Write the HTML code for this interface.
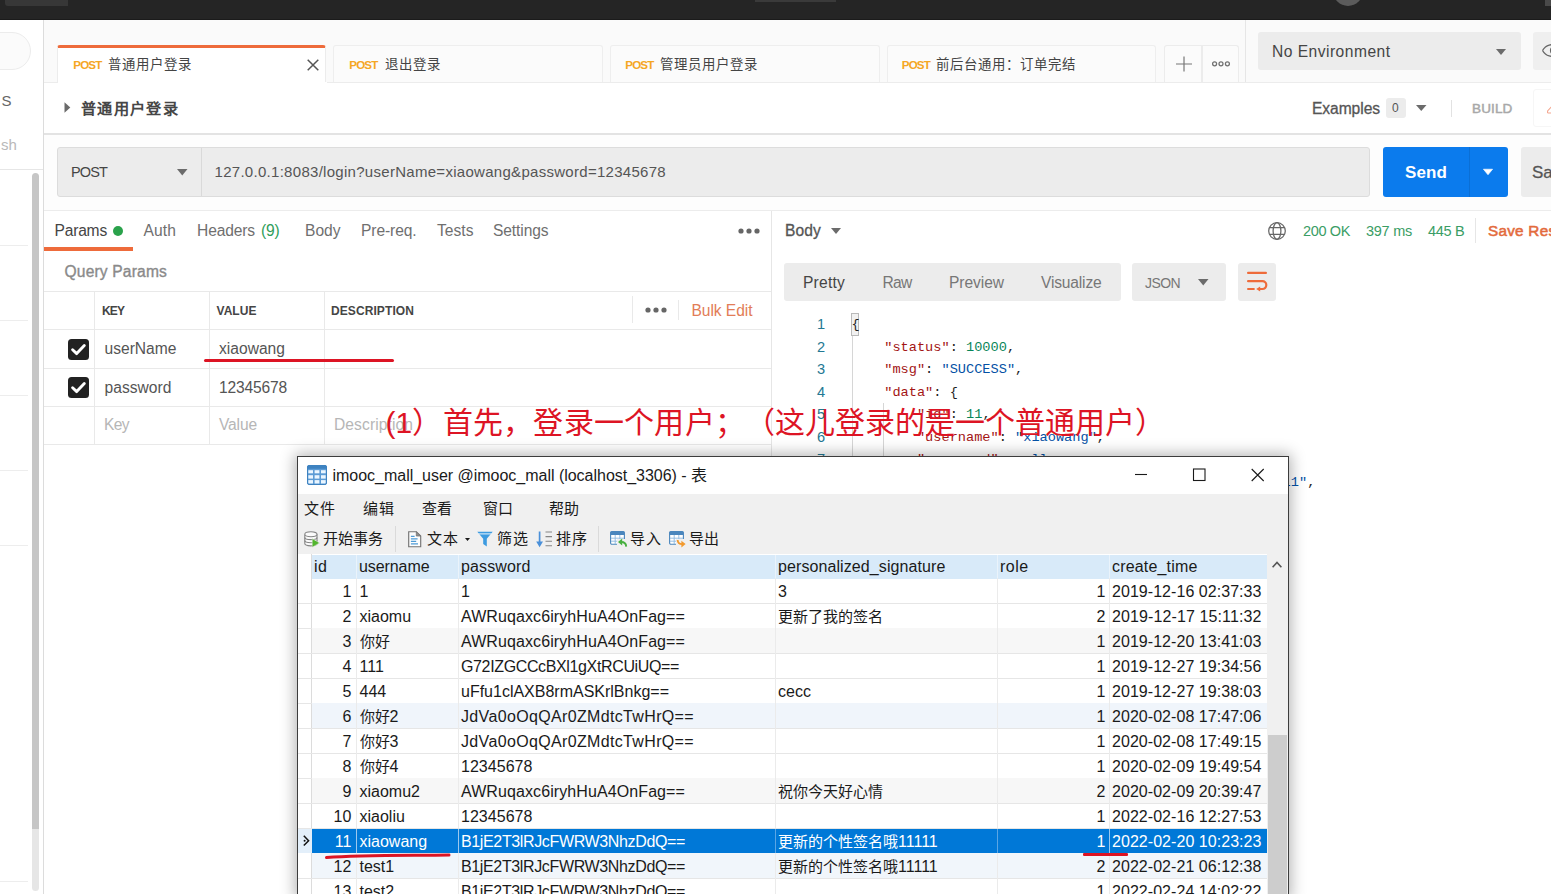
<!DOCTYPE html>
<html lang="zh-CN"><head><meta charset="utf-8"><title>Postman</title>
<style>
html,body{margin:0;padding:0;width:1551px;height:894px;overflow:hidden;background:#fff}
#root{position:relative;width:1551px;height:894px;overflow:hidden;background:#fff;font-family:"Liberation Sans",sans-serif;}
.a{position:absolute;box-sizing:border-box}
.t{position:absolute;white-space:pre;line-height:20px;height:20px}
.tj{white-space:nowrap;text-align:justify;text-align-last:justify}
.j{display:inline-block;white-space:nowrap;text-align:justify;text-align-last:justify;line-height:20px;vertical-align:baseline}
svg{display:block;overflow:visible}
</style></head>
<body>
<div id="root">
<div class="a" style="left:0px;top:0px;width:1551px;height:20px;background:#252525;border-bottom:1px solid #1b1b1b;"></div>
<div class="a" style="left:5px;top:0px;width:63px;height:6px;background:#373737;border-radius:0 0 0 3px;"></div>
<div class="a" style="left:755px;top:0px;width:81px;height:2px;background:#3a3a3a;"></div>
<div class="a" style="left:1333px;top:-24px;width:30px;height:30px;background:#5b5b5b;border-radius:50%;"></div>
<div class="a" style="left:1545px;top:0px;width:6px;height:6px;background:#4a4a4a;"></div>
<div class="a" style="left:44px;top:20px;width:1507px;height:62px;background:#fafafa;"></div>
<div class="a" style="left:0px;top:20px;width:44px;height:874px;background:#ffffff;border-right:1px solid #dcdcdc;"></div>
<div class="a" style="left:-40px;top:32px;width:71px;height:38px;background:#fbfbfb;border:1px solid #ececec;border-radius:19px;"></div>
<span id="t1" class="t" style="top:91.10px;font-size:15px;color:#666;left:1.5px;">S</span>
<span id="t2" class="t" style="top:134.80px;font-size:15px;color:#b9b9b9;left:1px;letter-spacing:0.078px;">sh</span>
<div class="a" style="left:0px;top:169px;width:43px;height:1px;background:#e6e6e6;"></div>
<div class="a" style="left:0px;top:245px;width:28px;height:1px;background:#ededed;"></div>
<div class="a" style="left:0px;top:320px;width:28px;height:1px;background:#ededed;"></div>
<div class="a" style="left:0px;top:395px;width:28px;height:1px;background:#ededed;"></div>
<div class="a" style="left:0px;top:470px;width:28px;height:1px;background:#ededed;"></div>
<div class="a" style="left:0px;top:545px;width:28px;height:1px;background:#ededed;"></div>
<div class="a" style="left:0px;top:881px;width:28px;height:1px;background:#ededed;"></div>
<div class="a" style="left:32px;top:173px;width:7px;height:660px;background:#c6c6c6;border-radius:4px;"></div>
<div class="a" style="left:32px;top:829px;width:7px;height:62px;background:#e6e6e6;border-radius:0 0 4px 4px;"></div>
<div class="a" style="left:56.8px;top:45px;width:269.7px;height:37px;background:#ffffff;border-top:3px solid #ee6b3b;border-radius:3px 3px 0 0;border-left:1px solid #ececec;border-right:1px solid #ececec;"></div>
<div class="a" style="left:333px;top:45.2px;width:270px;height:37.3px;background:#fbfbfb;border:1px solid #eeeeee;border-bottom:none;border-radius:3px 3px 0 0;"></div>
<div class="a" style="left:609.5px;top:45.2px;width:270.5px;height:37.3px;background:#fbfbfb;border:1px solid #eeeeee;border-bottom:none;border-radius:3px 3px 0 0;"></div>
<div class="a" style="left:886.5px;top:45.2px;width:269.5px;height:37.3px;background:#fbfbfb;border:1px solid #eeeeee;border-bottom:none;border-radius:3px 3px 0 0;"></div>
<span id="t3" class="t" style="top:55.18px;font-size:11.6px;color:#f5a623;left:73.2px;font-weight:700;letter-spacing:-0.795px;">POST</span>
<span id="t4" class="t tj" style="top:54.86px;font-size:13.4px;color:#444;left:108px;width:82.5px;">普通用户登录</span>
<span id="t5" class="t" style="top:55.18px;font-size:11.6px;color:#f5a623;left:349.2px;font-weight:700;letter-spacing:-0.795px;">POST</span>
<span id="t6" class="t tj" style="top:54.86px;font-size:13.4px;color:#444;left:384.5px;width:55.5px;">退出登录</span>
<span id="t7" class="t" style="top:55.18px;font-size:11.6px;color:#f5a623;left:625.2px;font-weight:700;letter-spacing:-0.795px;">POST</span>
<span id="t8" class="t tj" style="top:54.86px;font-size:13.4px;color:#444;left:660px;width:97px;">管理员用户登录</span>
<span id="t9" class="t" style="top:55.18px;font-size:11.6px;color:#f5a623;left:901.7px;font-weight:700;letter-spacing:-0.795px;">POST</span>
<span id="t10" class="t tj" style="top:54.86px;font-size:13.4px;color:#444;left:936px;width:138.5px;">前后台通用：订单完结</span>
<svg class="a" style="left:307px;top:59px;" width="12" height="12" viewBox="0 0 12 12"><path d="M0.7 0.7 L11.3 11.3 M11.3 0.7 L0.7 11.3" stroke="#555" stroke-width="1.5" fill="none"/></svg>
<div class="a" style="left:1163.8px;top:45px;width:38.7px;height:37.5px;background:#fbfbfb;border:1px solid #ececec;border-bottom:none;border-radius:3px 0 0 0;"></div>
<div class="a" style="left:1202px;top:45px;width:36.5px;height:37.5px;background:#fbfbfb;border:1px solid #ececec;border-bottom:none;border-radius:0 3px 0 0;"></div>
<svg class="a" style="left:1176px;top:56px;" width="16" height="16" viewBox="0 0 16 16"><path d="M0 8 H16 M8 0.5 V15.5" stroke="#777" stroke-width="1.2" fill="none"/></svg>
<svg class="a" style="left:1211px;top:60px;" width="20" height="8" viewBox="0 0 20 8"><g fill="none" stroke="#707070" stroke-width="1.25"><circle cx="3.6" cy="3.8" r="2"/><circle cx="10" cy="3.8" r="2"/><circle cx="16.4" cy="3.8" r="2"/></g></svg>
<div class="a" style="left:1245px;top:20px;width:1px;height:62px;background:#e6e6e6;"></div>
<div class="a" style="left:1258px;top:32px;width:263px;height:37.5px;background:#ececec;border-radius:3px;"></div>
<span id="t11" class="t" style="top:41.59px;font-size:15.6px;color:#454545;left:1272px;letter-spacing:0.478px;">No Environment</span>
<svg class="a" style="left:1495.5px;top:48.5px;" width="10" height="6" viewBox="0 0 10 6"><path d="M0 0 H10 L5 6 Z" fill="#6b6b6b"/></svg>
<div class="a" style="left:1532.5px;top:32px;width:30px;height:37.5px;background:#efefef;border-radius:3px;"></div>
<svg class="a" style="left:1541.2px;top:43px;overflow:hidden;" width="12" height="15" viewBox="0 0 12 15"><path d="M1.5 7.5 C5 1.5 11 0.5 16 3 M1.5 7.5 C5 13.5 11 14.5 16 12" stroke="#666" stroke-width="1.3" fill="none"/><circle cx="12.5" cy="7.5" r="3" fill="none" stroke="#666" stroke-width="1.2"/></svg>
<div class="a" style="left:44px;top:82px;width:1507px;height:51px;background:#ffffff;"></div>
<div class="a" style="left:44px;top:82px;width:14px;height:1px;background:#ececec;"></div>
<div class="a" style="left:326.5px;top:82px;width:1225px;height:1px;background:#ececec;"></div>
<div class="a" style="left:44px;top:133px;width:1507px;height:1.5px;background:#e3e3e3;"></div>
<svg class="a" style="left:64px;top:102px;" width="7" height="11" viewBox="0 0 7 11"><path d="M0.5 0.3 L6.3 5.5 L0.5 10.7 Z" fill="#6a6a6a"/></svg>
<span id="t12" class="t tj" style="top:99.03px;font-size:15.2px;color:#464646;left:81px;font-weight:700;width:96.5px;">普通用户登录</span>
<span id="t13" class="t" style="top:99.09px;font-size:15.6px;color:#555;left:1312px;letter-spacing:-0.059px;-webkit-text-stroke:0.3px #555;">Examples</span>
<div class="a" style="left:1386px;top:98px;width:19.5px;height:19.5px;background:#ececec;border-radius:3px;"></div>
<span id="t14" class="t" style="top:97.84px;font-size:12px;color:#555;left:1392px;letter-spacing:0.312px;">0</span>
<svg class="a" style="left:1415.5px;top:105px;" width="10.5" height="6" viewBox="0 0 10.5 6"><path d="M0 0 H10.5 L5.25 6 Z" fill="#6b6b6b"/></svg>
<div class="a" style="left:1450.5px;top:100px;width:1px;height:17px;background:#e2e2e2;"></div>
<span id="t15" class="t" style="top:99.32px;font-size:13.5px;color:#a8a8a8;left:1472px;letter-spacing:0.147px;-webkit-text-stroke:0.5px #a8a8a8;">BUILD</span>
<div class="a" style="left:1533px;top:89px;width:30px;height:38px;background:#ffffff;border:1px solid #f6f6f6;border-radius:3px;"></div>
<svg class="a" style="left:1546px;top:102px;" width="6" height="12" viewBox="0 0 6 12"><path d="M1.6 11 V9 L6 4.2 M1.6 11 H6" stroke="#f4a68e" stroke-width="1.1" fill="none"/></svg>
<div class="a" style="left:44px;top:134.5px;width:1507px;height:75px;background:#fdfdfd;"></div>
<div class="a" style="left:57px;top:147px;width:1313px;height:49.5px;background:#ececec;border:1px solid #dcdcdc;border-radius:3px;"></div>
<div class="a" style="left:201px;top:148px;width:1px;height:47.5px;background:#d9d9d9;"></div>
<span id="t16" class="t" style="top:162.48px;font-size:14.5px;color:#454545;left:71px;letter-spacing:-0.871px;">POST</span>
<svg class="a" style="left:176.5px;top:169px;" width="10.5" height="6.5" viewBox="0 0 10.5 6.5"><path d="M0 0 H10.5 L5.25 6.5 Z" fill="#6b6b6b"/></svg>
<span id="t17" class="t" style="top:162.30px;font-size:15px;color:#555;left:214.5px;letter-spacing:0.289px;">127.0.0.1:8083/login?userName=xiaowang&amp;password=12345678</span>
<div class="a" style="left:1383px;top:147px;width:124.5px;height:49.5px;background:#0b7bed;border-radius:3px;"></div>
<div class="a" style="left:1469px;top:147px;width:1px;height:49.5px;background:#0a6fd6;"></div>
<span id="t18" class="t" style="top:162.81px;font-size:17px;color:#fff;left:1405px;font-weight:700;letter-spacing:0.109px;">Send</span>
<svg class="a" style="left:1482.7px;top:168.8px;" width="10" height="6" viewBox="0 0 10 6"><path d="M0.4 0.2 H9.6 L5 5.8 Z" fill="#fff" stroke="#fff" stroke-width="0.6" stroke-linejoin="round"/></svg>
<div class="a" style="left:1521px;top:147px;width:40px;height:49.5px;background:#ececec;border-radius:3px;"></div>
<span id="t19" class="t" style="top:162.81px;font-size:17px;color:#555;left:1532px;-webkit-text-stroke:0.3px #555;">Sa</span>
<div class="a" style="left:44px;top:209.5px;width:1507px;height:1px;background:#ececec;"></div>
<div class="a" style="left:44px;top:210.5px;width:726.5px;height:684px;background:#ffffff;"></div>
<div class="a" style="left:770.5px;top:210.5px;width:1px;height:684px;background:#e6e6e6;"></div>
<span id="t20" class="t" style="top:221.09px;font-size:15.6px;color:#454545;left:54.5px;letter-spacing:-0.206px;">Params</span>
<div class="a" style="left:113px;top:226px;width:10px;height:10px;background:#2aa24b;border-radius:50%;"></div>
<div class="a" style="left:44px;top:247px;width:89px;height:4px;background:#ee6b3b;"></div>
<span id="t21" class="t" style="top:221.09px;font-size:15.6px;color:#6f6f6f;left:143.5px;letter-spacing:0.102px;">Auth</span>
<span id="t22" class="t" style="top:221.09px;font-size:15.6px;color:#6f6f6f;left:197px;letter-spacing:-0.136px;">Headers</span>
<span id="t23" class="t" style="top:221.09px;font-size:15.6px;color:#2f9e5b;left:261px;letter-spacing:-0.188px;">(9)</span>
<span id="t24" class="t" style="top:221.09px;font-size:15.6px;color:#6f6f6f;left:305px;letter-spacing:-0.012px;">Body</span>
<span id="t25" class="t" style="top:221.09px;font-size:15.6px;color:#6f6f6f;left:361px;letter-spacing:-0.105px;">Pre-req.</span>
<span id="t26" class="t" style="top:221.09px;font-size:15.6px;color:#6f6f6f;left:437px;letter-spacing:0.019px;">Tests</span>
<span id="t27" class="t" style="top:221.09px;font-size:15.6px;color:#6f6f6f;left:493px;letter-spacing:-0.107px;">Settings</span>
<svg class="a" style="left:738px;top:228px;" width="22" height="6" viewBox="0 0 22 6"><g fill="#666"><circle cx="3" cy="3" r="2.6"/><circle cx="11" cy="3" r="2.6"/><circle cx="19" cy="3" r="2.6"/></g></svg>
<span id="t28" class="t" style="top:261.59px;font-size:15.6px;color:#8a8a8a;left:64.5px;letter-spacing:0.164px;-webkit-text-stroke:0.35px #8a8a8a;">Query Params</span>
<div class="a" style="left:44px;top:291px;width:726.5px;height:1px;background:#e9e9e9;"></div>
<div class="a" style="left:44px;top:328.7px;width:726.5px;height:1px;background:#e9e9e9;"></div>
<div class="a" style="left:44px;top:367.7px;width:726.5px;height:1px;background:#e9e9e9;"></div>
<div class="a" style="left:44px;top:405.7px;width:726.5px;height:1px;background:#e9e9e9;"></div>
<div class="a" style="left:44px;top:444.3px;width:726.5px;height:1px;background:#e9e9e9;"></div>
<div class="a" style="left:94px;top:292px;width:1px;height:153px;background:#e9e9e9;"></div>
<div class="a" style="left:208.5px;top:292px;width:1px;height:153px;background:#e9e9e9;"></div>
<div class="a" style="left:323.5px;top:292px;width:1px;height:153px;background:#e9e9e9;"></div>
<div class="a" style="left:632px;top:296px;width:1px;height:27px;background:#e9e9e9;"></div>
<div class="a" style="left:678px;top:300px;width:1px;height:20px;background:#e9e9e9;"></div>
<span id="t29" class="t" style="top:300.84px;font-size:12px;color:#454545;left:102px;font-weight:700;letter-spacing:-0.896px;">KEY</span>
<span id="t30" class="t" style="top:300.84px;font-size:12px;color:#454545;left:216.5px;font-weight:700;letter-spacing:0.044px;">VALUE</span>
<span id="t31" class="t" style="top:300.84px;font-size:12px;color:#454545;left:331px;font-weight:700;letter-spacing:0.089px;">DESCRIPTION</span>
<svg class="a" style="left:645px;top:307px;" width="22" height="6" viewBox="0 0 22 6"><g fill="#666"><circle cx="3" cy="3" r="2.6"/><circle cx="11" cy="3" r="2.6"/><circle cx="19" cy="3" r="2.6"/></g></svg>
<span id="t32" class="t" style="top:301.09px;font-size:15.6px;color:#e27d57;left:691.5px;letter-spacing:-0.061px;">Bulk Edit</span>
<div class="a" style="left:68px;top:338.5px;width:21px;height:21px;background:#222222;border-radius:3.5px;"></div>
<svg class="a" style="left:68px;top:338.5px;" width="21" height="21" viewBox="0 0 21 21"><path d="M4.6 10.8 L8.7 14.6 L16.3 6.6" stroke="#fff" stroke-width="2.9" fill="none" stroke-linecap="round" stroke-linejoin="round"/></svg>
<div class="a" style="left:68px;top:376.5px;width:21px;height:21px;background:#222222;border-radius:3.5px;"></div>
<svg class="a" style="left:68px;top:376.5px;" width="21" height="21" viewBox="0 0 21 21"><path d="M4.6 10.8 L8.7 14.6 L16.3 6.6" stroke="#fff" stroke-width="2.9" fill="none" stroke-linecap="round" stroke-linejoin="round"/></svg>
<span id="t33" class="t" style="top:338.99px;font-size:15.6px;color:#555;left:104.6px;letter-spacing:-0.017px;">userName</span>
<span id="t34" class="t" style="top:338.99px;font-size:15.6px;color:#555;left:219px;letter-spacing:0.014px;">xiaowang</span>
<span id="t35" class="t" style="top:377.99px;font-size:15.6px;color:#555;left:104.6px;letter-spacing:0.006px;">password</span>
<span id="t36" class="t" style="top:377.99px;font-size:15.6px;color:#555;left:219px;letter-spacing:-0.174px;">12345678</span>
<span id="t37" class="t" style="top:415.09px;font-size:15.6px;color:#b6b6b6;left:104px;letter-spacing:-0.625px;">Key</span>
<span id="t38" class="t" style="top:415.09px;font-size:15.6px;color:#b6b6b6;left:219px;letter-spacing:-0.147px;">Value</span>
<span id="t39" class="t" style="top:415.09px;font-size:15.6px;color:#b6b6b6;left:334px;letter-spacing:0.091px;">Description</span>
<div class="a" style="left:771.5px;top:210.5px;width:780px;height:684px;background:#ffffff;"></div>
<span id="t40" class="t" style="top:221.09px;font-size:15.6px;color:#555;left:785px;letter-spacing:0.113px;-webkit-text-stroke:0.3px #555;">Body</span>
<svg class="a" style="left:831px;top:228px;" width="10" height="6" viewBox="0 0 10 6"><path d="M0 0 H10 L5 6 Z" fill="#6b6b6b"/></svg>
<svg class="a" style="left:1267.8px;top:221.8px;" width="18" height="18" viewBox="0 0 18 18"><g fill="none" stroke="#666" stroke-width="1.25"><circle cx="9" cy="9" r="8.3"/><ellipse cx="9" cy="9" rx="3.9" ry="8.3"/><path d="M1.6 5.7 H16.4 M1.6 12.3 H16.4"/></g></svg>
<span id="t41" class="t" style="top:221.48px;font-size:14.5px;color:#3a9d65;left:1303px;letter-spacing:-0.362px;">200 OK</span>
<span id="t42" class="t" style="top:221.48px;font-size:14.5px;color:#3a9d65;left:1366px;letter-spacing:-0.260px;">397 ms</span>
<span id="t43" class="t" style="top:221.48px;font-size:14.5px;color:#3a9d65;left:1428px;letter-spacing:-0.281px;">445 B</span>
<div class="a" style="left:1475px;top:218px;width:1px;height:25px;background:#e6e6e6;"></div>
<span id="t44" class="t" style="top:221.20px;font-size:15.3px;color:#e36b3d;left:1488px;letter-spacing:0.25px;-webkit-text-stroke:0.55px #e36b3d;">Save Res</span>
<div class="a" style="left:784px;top:263px;width:336.5px;height:37.5px;background:#ececec;border-radius:3px;"></div>
<span id="t45" class="t" style="top:272.59px;font-size:15.6px;color:#454545;left:803px;letter-spacing:0.211px;">Pretty</span>
<span id="t46" class="t" style="top:272.59px;font-size:15.6px;color:#777;left:882.5px;letter-spacing:-0.734px;">Raw</span>
<span id="t47" class="t" style="top:272.59px;font-size:15.6px;color:#777;left:949px;letter-spacing:-0.067px;">Preview</span>
<span id="t48" class="t" style="top:272.59px;font-size:15.6px;color:#777;left:1041px;letter-spacing:-0.181px;">Visualize</span>
<div class="a" style="left:1132px;top:263px;width:93.5px;height:37.5px;background:#ececec;border-radius:3px;"></div>
<span id="t49" class="t" style="top:273.15px;font-size:14px;color:#777;left:1145px;letter-spacing:-0.586px;">JSON</span>
<svg class="a" style="left:1198px;top:279px;" width="10.5" height="6.5" viewBox="0 0 10.5 6.5"><path d="M0 0 H10.5 L5.25 6.5 Z" fill="#6b6b6b"/></svg>
<div class="a" style="left:1238px;top:263px;width:37.5px;height:37.5px;background:#ececec;border-radius:3px;"></div>
<svg class="a" style="left:1247px;top:271px;" width="20" height="21" viewBox="0 0 20 21"><g fill="none" stroke="#ee6b3b" stroke-width="2.2" stroke-linecap="round"><path d="M1.1 1.9 H18.9"/><path d="M1.1 10.2 H15.4 A3.9 3.9 0 0 1 15.4 18 H13.4"/><path d="M1.1 18 H6.8"/></g><path d="M9.2 18 L13.2 15.4 V20.6 Z" fill="#ee6b3b"/></svg>
<div class="a" style="left:851px;top:313px;width:7.8px;height:22.5px;background:#f1f1f1;border:1px solid #b9b9b9;"></div>
<div class="a" style="left:851.5px;top:335.5px;width:1px;height:130px;background:#d6d6d6;"></div>
<div class="a" style="left:883px;top:402.5px;width:1px;height:70px;background:#d6d6d6;"></div>
<span id="t50" class="t" style="top:314.24px;font-size:14.6px;color:#237893;left:817px;letter-spacing:0.075px;">1</span>
<span id="t51" class="t" style="top:336.74px;font-size:14.6px;color:#237893;left:817px;letter-spacing:0.075px;">2</span>
<span id="t52" class="t" style="top:359.24px;font-size:14.6px;color:#237893;left:817px;letter-spacing:0.075px;">3</span>
<span id="t53" class="t" style="top:381.74px;font-size:14.6px;color:#237893;left:817px;letter-spacing:0.075px;">4</span>
<span id="t54" class="t" style="top:404.24px;font-size:14.6px;color:#237893;left:817px;letter-spacing:0.075px;">5</span>
<span id="t55" class="t" style="top:426.74px;font-size:14.6px;color:#237893;left:817px;letter-spacing:0.075px;">6</span>
<span id="t56" class="t" style="top:449.24px;font-size:14.6px;color:#237893;left:817px;letter-spacing:0.075px;">7</span>
<span id="t57" class="t" style="top:315.37px;font-size:13.63px;color:#1e1e1e;left:851.5px;font-family:'Liberation Mono',monospace;"><span style="color:#1e1e1e">{</span></span>
<span id="t58" class="t" style="top:337.87px;font-size:13.63px;color:#1e1e1e;left:884.22px;font-family:'Liberation Mono',monospace;"><span style="color:#a31515">&quot;status&quot;</span><span style="color:#1e1e1e">: </span><span style="color:#098658">10000</span><span style="color:#1e1e1e">,</span></span>
<span id="t59" class="t" style="top:360.37px;font-size:13.63px;color:#1e1e1e;left:884.22px;font-family:'Liberation Mono',monospace;"><span style="color:#a31515">&quot;msg&quot;</span><span style="color:#1e1e1e">: </span><span style="color:#0451a5">&quot;SUCCESS&quot;</span><span style="color:#1e1e1e">,</span></span>
<span id="t60" class="t" style="top:382.87px;font-size:13.63px;color:#1e1e1e;left:884.22px;font-family:'Liberation Mono',monospace;"><span style="color:#a31515">&quot;data&quot;</span><span style="color:#1e1e1e">: {</span></span>
<span id="t61" class="t" style="top:405.37px;font-size:13.63px;color:#1e1e1e;left:916.94px;font-family:'Liberation Mono',monospace;"><span style="color:#a31515">&quot;id&quot;</span><span style="color:#1e1e1e">: </span><span style="color:#098658">11</span><span style="color:#1e1e1e">,</span></span>
<span id="t62" class="t" style="top:427.87px;font-size:13.63px;color:#1e1e1e;left:916.94px;font-family:'Liberation Mono',monospace;"><span style="color:#a31515">&quot;username&quot;</span><span style="color:#1e1e1e">: </span><span style="color:#0451a5">&quot;xiaowang&quot;</span><span style="color:#1e1e1e">,</span></span>
<span id="t63" class="t" style="top:450.37px;font-size:13.63px;color:#1e1e1e;left:916.94px;font-family:'Liberation Mono',monospace;"><span style="color:#a31515">&quot;password&quot;</span><span style="color:#1e1e1e">: </span><span style="color:#0451a5">null</span><span style="color:#1e1e1e">,</span></span>
<span id="t64" class="t" style="top:472.87px;font-size:13.63px;color:#1e1e1e;left:1282.6px;font-family:'Liberation Mono',monospace;"><span style="color:#0451a5">11"</span><span style="color:#1e1e1e">,</span></span>
<div class="a" style="left:204px;top:358.5px;width:189.5px;height:3px;background:#dd1424;border-radius:1.5px;"></div>
<span id="t65" class="t tj" style="top:412.91px;font-size:30px;color:#dd1424;left:385.5px;width:359.5px;z-index:50;text-spacing-trim:space-all;font-kerning:none;">(1）首先，登录一个用户；</span>
<span id="t66" class="t tj" style="top:412.91px;font-size:30px;color:#dd1424;left:745px;width:420px;z-index:50;text-spacing-trim:space-all;font-kerning:none;">（这儿登录的是一个普通用户）</span>
<div class="a" style="left:297px;top:456px;width:992px;height:442px;background:#fff;border:1px solid #3c3c3c;border-bottom:none;box-shadow:0 0 14px 2px rgba(0,0,0,0.30);z-index:10;"></div>
<div class="a" id="nav" style="left:0;top:0;width:1551px;height:894px;z-index:11;">
<svg class="a" style="left:307px;top:465px;" width="20" height="20" viewBox="0 0 20 20"><rect x="0.2" y="0.2" width="19.6" height="19.6" rx="1.8" fill="#5b9bd5"/><path d="M0.2 2 Q0.2 0.2 2 0.2 H18 Q19.8 0.2 19.8 2 V3.8 H0.2 Z" fill="#3d82c0"/><g fill="#eaf6ff"><rect x="1.3" y="5.2" width="4.7" height="3.1"/><rect x="7.6" y="5.2" width="4.8" height="3.1"/><rect x="14" y="5.2" width="4.7" height="3.1"/><rect x="1.3" y="10.2" width="4.7" height="3.4"/><rect x="7.6" y="10.2" width="4.8" height="3.4"/><rect x="14" y="10.2" width="4.7" height="3.4"/><rect x="1.3" y="15.1" width="4.7" height="3.4"/><rect x="7.6" y="15.1" width="4.8" height="3.4"/><rect x="14" y="15.1" width="4.7" height="3.4"/></g><rect x="0.5" y="0.5" width="19" height="19" rx="1.6" fill="none" stroke="#3d82c0" stroke-width="1"/></svg>
<span id="t67" class="t" style="top:465.86px;font-size:16px;color:#1a1a1a;left:332.5px;letter-spacing:-0.021px;">imooc_mall_user @imooc_mall (localhost_3306) - 表</span>
<svg class="a" style="left:1135px;top:468px;" width="130" height="14" viewBox="0 0 130 14"><g fill="none" stroke="#1a1a1a" stroke-width="1.1"><path d="M0 6.5 H12"/><rect x="58.5" y="1" width="11.5" height="11.5"/><path d="M116.7 1 L128.7 13 M128.7 1 L116.7 13"/></g></svg>
<div class="a" style="left:298px;top:494px;width:990px;height:59.5px;background:#f0f0f0;"></div>
<span id="t68" class="t tj" style="top:499.40px;font-size:15px;color:#1a1a1a;left:304px;width:30.5px;">文件</span>
<span id="t69" class="t tj" style="top:499.40px;font-size:15px;color:#1a1a1a;left:363px;width:30.5px;">编辑</span>
<span id="t70" class="t tj" style="top:499.40px;font-size:15px;color:#1a1a1a;left:422px;width:30px;">查看</span>
<span id="t71" class="t tj" style="top:499.40px;font-size:15px;color:#1a1a1a;left:483px;width:30px;">窗口</span>
<span id="t72" class="t tj" style="top:499.40px;font-size:15px;color:#1a1a1a;left:549px;width:30px;">帮助</span>
<span id="t73" class="t tj" style="top:529.40px;font-size:15px;color:#1a1a1a;left:323px;width:60px;">开始事务</span>
<span id="t74" class="t tj" style="top:529.40px;font-size:15px;color:#1a1a1a;left:427px;width:30.5px;">文本</span>
<span id="t75" class="t tj" style="top:529.40px;font-size:15px;color:#1a1a1a;left:497px;width:30.5px;">筛选</span>
<span id="t76" class="t tj" style="top:529.40px;font-size:15px;color:#1a1a1a;left:556px;width:30.5px;">排序</span>
<span id="t77" class="t tj" style="top:529.40px;font-size:15px;color:#1a1a1a;left:630px;width:30.5px;">导入</span>
<span id="t78" class="t tj" style="top:529.40px;font-size:15px;color:#1a1a1a;left:689px;width:30px;">导出</span>
<div class="a" style="left:395px;top:526px;width:1px;height:26px;background:#dadada;"></div>
<div class="a" style="left:598px;top:526px;width:1px;height:26px;background:#dadada;"></div>
<svg class="a" style="left:303.6px;top:530.6px;" width="16" height="17" viewBox="0 0 16 17"><g fill="#fbfbfb" stroke="#858585" stroke-width="1.1"><path d="M0.8 3.2 V12.6 C0.8 15.6 13 15.6 13 12.6 V3.2"/><ellipse cx="6.9" cy="3.2" rx="6.1" ry="2.5"/><path d="M0.8 6.4 C0.8 9.3 13 9.3 13 6.4 M0.8 9.6 C0.8 12.5 13 12.5 13 9.6" fill="none"/></g><path d="M8.2 7.6 L15.6 11.9 L8.2 16.3 Z" fill="#52b52e" stroke="#f0f0f0" stroke-width="0.5"/></svg>
<svg class="a" style="left:408px;top:531px;" width="13.5" height="16.5" viewBox="0 0 13.5 16.5"><path d="M0.7 0.7 H8.3 L12.7 5 V15.7 H0.7 Z" fill="#fdfdfd" stroke="#747474" stroke-width="1.15"/><path d="M8.3 0.7 V5 H12.7 Z" fill="#8d8d8d" stroke="#747474" stroke-width="0.8"/><path d="M2.9 5.4 H6.6 M2.9 7.9 H9.6 M2.9 10.4 H8.2 M2.9 12.9 H10" stroke="#4d9bd6" stroke-width="1.1"/></svg>
<svg class="a" style="left:465px;top:538px;" width="5" height="3" viewBox="0 0 5 3"><path d="M0 0 H5 L2.5 3 Z" fill="#1a1a1a"/></svg>
<svg class="a" style="left:477px;top:531px;" width="16" height="16" viewBox="0 0 16 16"><path d="M0.3 0.8 H15.7 L9.8 7.8 V15.5 L6.2 13 V7.8 Z" fill="#3d9be0"/><path d="M1.5 2.9 H14.5" stroke="#e9f4fc" stroke-width="1"/></svg>
<svg class="a" style="left:536px;top:530.5px;" width="17" height="17" viewBox="0 0 17 17"><path d="M3.6 0.5 V12" stroke="#4a90d9" stroke-width="1.7" fill="none"/><path d="M0.2 10.4 H7 L3.6 16.2 Z" fill="#4a90d9"/><path d="M9.5 1 H16 M9.5 5.6 H16 M9.5 10.2 H16 M9.5 14.8 H16" stroke="#858585" stroke-width="1.1"/></svg>
<svg class="a" style="left:609.5px;top:531px;" width="18" height="17" viewBox="0 0 18 17"><rect x="0.6" y="0.6" width="13.8" height="12.6" rx="1.2" fill="#fff" stroke="#4a86bd" stroke-width="1.1"/><path d="M0.6 1.6 Q0.6 0.6 1.6 0.6 H13.4 Q14.4 0.6 14.4 1.6 V4 H0.6 Z" fill="#4a86bd"/><path d="M1 7.2 H14 M1 10.2 H14 M5.2 4 V13 M9.8 4 V13" stroke="#8db9e0" stroke-width="0.9"/><path d="M7 8 H18 V17 H7 Z" fill="#f0f0f0"/><path d="M16.2 15.6 C16 11.6 13.5 10.9 10.8 11" fill="none" stroke="#48b040" stroke-width="1.9"/><path d="M12.2 7.6 L8 11 L12.2 14.4 Z" fill="#48b040"/></svg>
<svg class="a" style="left:668.5px;top:531px;" width="18" height="17" viewBox="0 0 18 17"><rect x="0.6" y="0.6" width="13.8" height="12.6" rx="1.2" fill="#fff" stroke="#4a86bd" stroke-width="1.1"/><path d="M0.6 1.6 Q0.6 0.6 1.6 0.6 H13.4 Q14.4 0.6 14.4 1.6 V4 H0.6 Z" fill="#4a86bd"/><path d="M1 7.2 H14 M1 10.2 H14 M5.2 4 V13 M9.8 4 V13" stroke="#8db9e0" stroke-width="0.9"/><path d="M7 8 H18 V17 H7 Z" fill="#f0f0f0"/><path d="M8.6 9 C8.8 12.4 11 13.2 13.6 13.1" fill="none" stroke="#f29a2e" stroke-width="1.9"/><path d="M12.4 9.8 L16.6 13.1 L12.4 16.5 Z" fill="#f29a2e"/></svg>
<div class="a" style="left:298px;top:553.9px;width:13.8px;height:341px;background:#ffffff;border-right:1px solid #dcdcdc;"></div>
<div class="a" style="left:311.5px;top:554.5px;width:955px;height:24px;background:#d8eaf9;"></div>
<div class="a" style="left:356px;top:554.5px;width:1px;height:24px;background:#eaf3fb;"></div>
<div class="a" style="left:458px;top:554.5px;width:1px;height:24px;background:#eaf3fb;"></div>
<div class="a" style="left:775px;top:554.5px;width:1px;height:24px;background:#eaf3fb;"></div>
<div class="a" style="left:997px;top:554.5px;width:1px;height:24px;background:#eaf3fb;"></div>
<div class="a" style="left:1109px;top:554.5px;width:1px;height:24px;background:#eaf3fb;"></div>
<span id="t79" class="t" style="top:557.06px;font-size:16px;color:#1a1a1a;left:314px;letter-spacing:0.523px;">id</span>
<span id="t80" class="t" style="top:557.06px;font-size:16px;color:#1a1a1a;left:359px;letter-spacing:-0.082px;">username</span>
<span id="t81" class="t" style="top:557.06px;font-size:16px;color:#1a1a1a;left:461px;letter-spacing:0.127px;">password</span>
<span id="t82" class="t" style="top:557.06px;font-size:16px;color:#1a1a1a;left:778px;letter-spacing:0.093px;">personalized_signature</span>
<span id="t83" class="t" style="top:557.06px;font-size:16px;color:#1a1a1a;left:1000px;letter-spacing:0.453px;">role</span>
<span id="t84" class="t" style="top:557.06px;font-size:16px;color:#1a1a1a;left:1112px;letter-spacing:0.173px;">create_time</span>
<div class="a" style="left:298px;top:602.5px;width:968.5px;height:1px;background:#e6e6e6;"></div>
<div class="a" style="left:356px;top:578px;width:1px;height:25px;background:#ebebeb;"></div>
<div class="a" style="left:458px;top:578px;width:1px;height:25px;background:#ebebeb;"></div>
<div class="a" style="left:775px;top:578px;width:1px;height:25px;background:#ebebeb;"></div>
<div class="a" style="left:997px;top:578px;width:1px;height:25px;background:#ebebeb;"></div>
<div class="a" style="left:1109px;top:578px;width:1px;height:25px;background:#ebebeb;"></div>
<span id="t85" class="t" style="top:581.96px;font-size:16px;color:#1a1a1a;right:1199.7px;">1</span>
<span id="t86" class="t" style="top:581.96px;font-size:16px;color:#1a1a1a;left:359.5px;">1</span>
<span id="t87" class="t" style="top:581.96px;font-size:16px;color:#1a1a1a;left:461px;">1</span>
<span id="t88" class="t" style="top:581.96px;font-size:16px;color:#1a1a1a;left:778px;">3</span>
<span id="t89" class="t" style="top:581.96px;font-size:16px;color:#1a1a1a;right:445.7px;">1</span>
<span id="t90" class="t" style="top:581.96px;font-size:16px;color:#1a1a1a;left:1112px;letter-spacing:0.049px;">2019-12-16 02:37:33</span>
<div class="a" style="left:298px;top:627.5px;width:968.5px;height:1px;background:#e6e6e6;"></div>
<div class="a" style="left:356px;top:603px;width:1px;height:25px;background:#ebebeb;"></div>
<div class="a" style="left:458px;top:603px;width:1px;height:25px;background:#ebebeb;"></div>
<div class="a" style="left:775px;top:603px;width:1px;height:25px;background:#ebebeb;"></div>
<div class="a" style="left:997px;top:603px;width:1px;height:25px;background:#ebebeb;"></div>
<div class="a" style="left:1109px;top:603px;width:1px;height:25px;background:#ebebeb;"></div>
<span id="t91" class="t" style="top:606.96px;font-size:16px;color:#1a1a1a;right:1199.7px;">2</span>
<span id="t92" class="t" style="top:606.96px;font-size:16px;color:#1a1a1a;left:359.5px;">xiaomu</span>
<span id="t93" class="t" style="top:606.96px;font-size:16px;color:#1a1a1a;left:461px;letter-spacing:0.094px;">AWRuqaxc6iryhHuA4OnFag==</span>
<span id="t94" class="t tj" style="top:607.30px;font-size:15px;color:#1a1a1a;left:778px;width:105px;">更新了我的签名</span>
<span id="t95" class="t" style="top:606.96px;font-size:16px;color:#1a1a1a;right:445.7px;">2</span>
<span id="t96" class="t" style="top:606.96px;font-size:16px;color:#1a1a1a;left:1112px;letter-spacing:0.111px;">2019-12-17 15:11:32</span>
<div class="a" style="left:311.5px;top:628px;width:955px;height:25px;background:#f7f7f7;"></div>
<div class="a" style="left:298px;top:652.5px;width:968.5px;height:1px;background:#e6e6e6;"></div>
<div class="a" style="left:356px;top:628px;width:1px;height:25px;background:#ebebeb;"></div>
<div class="a" style="left:458px;top:628px;width:1px;height:25px;background:#ebebeb;"></div>
<div class="a" style="left:775px;top:628px;width:1px;height:25px;background:#ebebeb;"></div>
<div class="a" style="left:997px;top:628px;width:1px;height:25px;background:#ebebeb;"></div>
<div class="a" style="left:1109px;top:628px;width:1px;height:25px;background:#ebebeb;"></div>
<span id="t97" class="t" style="top:631.96px;font-size:16px;color:#1a1a1a;right:1199.7px;">3</span>
<span id="t98" class="t" style="top:631.96px;font-size:16px;color:#1a1a1a;left:359.5px;"><span class="j" style="width:30px;font-size:15px;">你好</span></span>
<span id="t99" class="t" style="top:631.96px;font-size:16px;color:#1a1a1a;left:461px;letter-spacing:0.094px;">AWRuqaxc6iryhHuA4OnFag==</span>
<span id="t100" class="t" style="top:631.96px;font-size:16px;color:#1a1a1a;right:445.7px;">1</span>
<span id="t101" class="t" style="top:631.96px;font-size:16px;color:#1a1a1a;left:1112px;letter-spacing:0.049px;">2019-12-20 13:41:03</span>
<div class="a" style="left:298px;top:677.5px;width:968.5px;height:1px;background:#e6e6e6;"></div>
<div class="a" style="left:356px;top:653px;width:1px;height:25px;background:#ebebeb;"></div>
<div class="a" style="left:458px;top:653px;width:1px;height:25px;background:#ebebeb;"></div>
<div class="a" style="left:775px;top:653px;width:1px;height:25px;background:#ebebeb;"></div>
<div class="a" style="left:997px;top:653px;width:1px;height:25px;background:#ebebeb;"></div>
<div class="a" style="left:1109px;top:653px;width:1px;height:25px;background:#ebebeb;"></div>
<span id="t102" class="t" style="top:656.96px;font-size:16px;color:#1a1a1a;right:1199.7px;">4</span>
<span id="t103" class="t" style="top:656.96px;font-size:16px;color:#1a1a1a;left:359.5px;">111</span>
<span id="t104" class="t" style="top:656.96px;font-size:16px;color:#1a1a1a;left:461px;letter-spacing:-0.364px;">G72IZGCCcBXl1gXtRCUiUQ==</span>
<span id="t105" class="t" style="top:656.96px;font-size:16px;color:#1a1a1a;right:445.7px;">1</span>
<span id="t106" class="t" style="top:656.96px;font-size:16px;color:#1a1a1a;left:1112px;letter-spacing:0.049px;">2019-12-27 19:34:56</span>
<div class="a" style="left:298px;top:702.5px;width:968.5px;height:1px;background:#e6e6e6;"></div>
<div class="a" style="left:356px;top:678px;width:1px;height:25px;background:#ebebeb;"></div>
<div class="a" style="left:458px;top:678px;width:1px;height:25px;background:#ebebeb;"></div>
<div class="a" style="left:775px;top:678px;width:1px;height:25px;background:#ebebeb;"></div>
<div class="a" style="left:997px;top:678px;width:1px;height:25px;background:#ebebeb;"></div>
<div class="a" style="left:1109px;top:678px;width:1px;height:25px;background:#ebebeb;"></div>
<span id="t107" class="t" style="top:681.96px;font-size:16px;color:#1a1a1a;right:1199.7px;">5</span>
<span id="t108" class="t" style="top:681.96px;font-size:16px;color:#1a1a1a;left:359.5px;">444</span>
<span id="t109" class="t" style="top:681.96px;font-size:16px;color:#1a1a1a;left:461px;letter-spacing:-0.004px;">uFfu1clAXB8rmASKrlBnkg==</span>
<span id="t110" class="t" style="top:681.96px;font-size:16px;color:#1a1a1a;left:778px;">cecc</span>
<span id="t111" class="t" style="top:681.96px;font-size:16px;color:#1a1a1a;right:445.7px;">1</span>
<span id="t112" class="t" style="top:681.96px;font-size:16px;color:#1a1a1a;left:1112px;letter-spacing:0.049px;">2019-12-27 19:38:03</span>
<div class="a" style="left:311.5px;top:703px;width:955px;height:25px;background:#f0f5fb;"></div>
<div class="a" style="left:298px;top:727.5px;width:968.5px;height:1px;background:#e6e6e6;"></div>
<div class="a" style="left:356px;top:703px;width:1px;height:25px;background:#ebebeb;"></div>
<div class="a" style="left:458px;top:703px;width:1px;height:25px;background:#ebebeb;"></div>
<div class="a" style="left:775px;top:703px;width:1px;height:25px;background:#ebebeb;"></div>
<div class="a" style="left:997px;top:703px;width:1px;height:25px;background:#ebebeb;"></div>
<div class="a" style="left:1109px;top:703px;width:1px;height:25px;background:#ebebeb;"></div>
<span id="t113" class="t" style="top:706.96px;font-size:16px;color:#1a1a1a;right:1199.7px;">6</span>
<span id="t114" class="t" style="top:706.96px;font-size:16px;color:#1a1a1a;left:359.5px;"><span class="j" style="width:30px;font-size:15px;">你好</span>2</span>
<span id="t115" class="t" style="top:706.96px;font-size:16px;color:#1a1a1a;left:461px;letter-spacing:0.347px;">JdVa0oOqQAr0ZMdtcTwHrQ==</span>
<span id="t116" class="t" style="top:706.96px;font-size:16px;color:#1a1a1a;right:445.7px;">1</span>
<span id="t117" class="t" style="top:706.96px;font-size:16px;color:#1a1a1a;left:1112px;letter-spacing:0.049px;">2020-02-08 17:47:06</span>
<div class="a" style="left:298px;top:752.5px;width:968.5px;height:1px;background:#e6e6e6;"></div>
<div class="a" style="left:356px;top:728px;width:1px;height:25px;background:#ebebeb;"></div>
<div class="a" style="left:458px;top:728px;width:1px;height:25px;background:#ebebeb;"></div>
<div class="a" style="left:775px;top:728px;width:1px;height:25px;background:#ebebeb;"></div>
<div class="a" style="left:997px;top:728px;width:1px;height:25px;background:#ebebeb;"></div>
<div class="a" style="left:1109px;top:728px;width:1px;height:25px;background:#ebebeb;"></div>
<span id="t118" class="t" style="top:731.96px;font-size:16px;color:#1a1a1a;right:1199.7px;">7</span>
<span id="t119" class="t" style="top:731.96px;font-size:16px;color:#1a1a1a;left:359.5px;"><span class="j" style="width:30px;font-size:15px;">你好</span>3</span>
<span id="t120" class="t" style="top:731.96px;font-size:16px;color:#1a1a1a;left:461px;letter-spacing:0.347px;">JdVa0oOqQAr0ZMdtcTwHrQ==</span>
<span id="t121" class="t" style="top:731.96px;font-size:16px;color:#1a1a1a;right:445.7px;">1</span>
<span id="t122" class="t" style="top:731.96px;font-size:16px;color:#1a1a1a;left:1112px;letter-spacing:0.049px;">2020-02-08 17:49:15</span>
<div class="a" style="left:298px;top:777.5px;width:968.5px;height:1px;background:#e6e6e6;"></div>
<div class="a" style="left:356px;top:753px;width:1px;height:25px;background:#ebebeb;"></div>
<div class="a" style="left:458px;top:753px;width:1px;height:25px;background:#ebebeb;"></div>
<div class="a" style="left:775px;top:753px;width:1px;height:25px;background:#ebebeb;"></div>
<div class="a" style="left:997px;top:753px;width:1px;height:25px;background:#ebebeb;"></div>
<div class="a" style="left:1109px;top:753px;width:1px;height:25px;background:#ebebeb;"></div>
<span id="t123" class="t" style="top:756.96px;font-size:16px;color:#1a1a1a;right:1199.7px;">8</span>
<span id="t124" class="t" style="top:756.96px;font-size:16px;color:#1a1a1a;left:359.5px;"><span class="j" style="width:30px;font-size:15px;">你好</span>4</span>
<span id="t125" class="t" style="top:756.96px;font-size:16px;color:#1a1a1a;left:461px;letter-spacing:0.039px;">12345678</span>
<span id="t126" class="t" style="top:756.96px;font-size:16px;color:#1a1a1a;right:445.7px;">1</span>
<span id="t127" class="t" style="top:756.96px;font-size:16px;color:#1a1a1a;left:1112px;letter-spacing:0.049px;">2020-02-09 19:49:54</span>
<div class="a" style="left:311.5px;top:778px;width:955px;height:25px;background:#f7f7f7;"></div>
<div class="a" style="left:298px;top:802.5px;width:968.5px;height:1px;background:#e6e6e6;"></div>
<div class="a" style="left:356px;top:778px;width:1px;height:25px;background:#ebebeb;"></div>
<div class="a" style="left:458px;top:778px;width:1px;height:25px;background:#ebebeb;"></div>
<div class="a" style="left:775px;top:778px;width:1px;height:25px;background:#ebebeb;"></div>
<div class="a" style="left:997px;top:778px;width:1px;height:25px;background:#ebebeb;"></div>
<div class="a" style="left:1109px;top:778px;width:1px;height:25px;background:#ebebeb;"></div>
<span id="t128" class="t" style="top:781.96px;font-size:16px;color:#1a1a1a;right:1199.7px;">9</span>
<span id="t129" class="t" style="top:781.96px;font-size:16px;color:#1a1a1a;left:359.5px;">xiaomu2</span>
<span id="t130" class="t" style="top:781.96px;font-size:16px;color:#1a1a1a;left:461px;letter-spacing:0.094px;">AWRuqaxc6iryhHuA4OnFag==</span>
<span id="t131" class="t tj" style="top:782.30px;font-size:15px;color:#1a1a1a;left:778px;width:105px;">祝你今天好心情</span>
<span id="t132" class="t" style="top:781.96px;font-size:16px;color:#1a1a1a;right:445.7px;">2</span>
<span id="t133" class="t" style="top:781.96px;font-size:16px;color:#1a1a1a;left:1112px;letter-spacing:0.049px;">2020-02-09 20:39:47</span>
<div class="a" style="left:298px;top:827.5px;width:968.5px;height:1px;background:#e6e6e6;"></div>
<div class="a" style="left:356px;top:803px;width:1px;height:25px;background:#ebebeb;"></div>
<div class="a" style="left:458px;top:803px;width:1px;height:25px;background:#ebebeb;"></div>
<div class="a" style="left:775px;top:803px;width:1px;height:25px;background:#ebebeb;"></div>
<div class="a" style="left:997px;top:803px;width:1px;height:25px;background:#ebebeb;"></div>
<div class="a" style="left:1109px;top:803px;width:1px;height:25px;background:#ebebeb;"></div>
<span id="t134" class="t" style="top:806.96px;font-size:16px;color:#1a1a1a;right:1199.7px;">10</span>
<span id="t135" class="t" style="top:806.96px;font-size:16px;color:#1a1a1a;left:359.5px;">xiaoliu</span>
<span id="t136" class="t" style="top:806.96px;font-size:16px;color:#1a1a1a;left:461px;letter-spacing:0.039px;">12345678</span>
<span id="t137" class="t" style="top:806.96px;font-size:16px;color:#1a1a1a;right:445.7px;">1</span>
<span id="t138" class="t" style="top:806.96px;font-size:16px;color:#1a1a1a;left:1112px;letter-spacing:0.049px;">2022-02-16 12:27:53</span>
<div class="a" style="left:298px;top:828.5px;width:13.5px;height:24.5px;background:#e3effa;"></div>
<div class="a" style="left:311.5px;top:828.5px;width:955px;height:24px;background:#0078d7;"></div>
<div class="a" style="left:356px;top:828.5px;width:1px;height:24px;background:#9cc8ee;"></div>
<div class="a" style="left:458px;top:828.5px;width:1px;height:24px;background:#9cc8ee;"></div>
<div class="a" style="left:775px;top:828.5px;width:1px;height:24px;background:#5aa5e4;"></div>
<div class="a" style="left:997px;top:828.5px;width:1px;height:24px;background:#5aa5e4;"></div>
<div class="a" style="left:1109px;top:828.5px;width:1px;height:24px;background:#9cc8ee;"></div>
<svg class="a" style="left:303px;top:835px;" width="7" height="12" viewBox="0 0 7 12"><path d="M0.8 0.8 L5.6 5.7 L0.8 10.6" stroke="#111" stroke-width="1.5" fill="none"/><circle cx="1.6" cy="5.7" r="1" fill="#111"/></svg>
<span id="t139" class="t" style="top:831.96px;font-size:16px;color:#ffffff;right:1199.7px;">11</span>
<span id="t140" class="t" style="top:831.96px;font-size:16px;color:#ffffff;left:359.5px;">xiaowang</span>
<span id="t141" class="t" style="top:831.96px;font-size:16px;color:#ffffff;left:461px;letter-spacing:-0.361px;">B1jE2T3lRJcFWRW3NhzDdQ==</span>
<span id="t142" class="t" style="top:831.96px;font-size:16px;color:#ffffff;left:778px;"><span class="j" style="width:120px;font-size:15px;">更新的个性签名哦</span>11111</span>
<span id="t143" class="t" style="top:831.96px;font-size:16px;color:#ffffff;right:445.7px;">1</span>
<span id="t144" class="t" style="top:831.96px;font-size:16px;color:#ffffff;left:1112px;letter-spacing:0.049px;">2022-02-20 10:23:23</span>
<div class="a" style="left:311.5px;top:853px;width:955px;height:25px;background:#f1f6fb;"></div>
<div class="a" style="left:298px;top:877.5px;width:968.5px;height:1px;background:#e6e6e6;"></div>
<div class="a" style="left:356px;top:853px;width:1px;height:25px;background:#ebebeb;"></div>
<div class="a" style="left:458px;top:853px;width:1px;height:25px;background:#ebebeb;"></div>
<div class="a" style="left:775px;top:853px;width:1px;height:25px;background:#ebebeb;"></div>
<div class="a" style="left:997px;top:853px;width:1px;height:25px;background:#ebebeb;"></div>
<div class="a" style="left:1109px;top:853px;width:1px;height:25px;background:#ebebeb;"></div>
<span id="t145" class="t" style="top:856.96px;font-size:16px;color:#1a1a1a;right:1199.7px;">12</span>
<span id="t146" class="t" style="top:856.96px;font-size:16px;color:#1a1a1a;left:359.5px;">test1</span>
<span id="t147" class="t" style="top:856.96px;font-size:16px;color:#1a1a1a;left:461px;letter-spacing:-0.361px;">B1jE2T3lRJcFWRW3NhzDdQ==</span>
<span id="t148" class="t" style="top:856.96px;font-size:16px;color:#1a1a1a;left:778px;"><span class="j" style="width:120px;font-size:15px;">更新的个性签名哦</span>11111</span>
<span id="t149" class="t" style="top:856.96px;font-size:16px;color:#1a1a1a;right:445.7px;">2</span>
<span id="t150" class="t" style="top:856.96px;font-size:16px;color:#1a1a1a;left:1112px;letter-spacing:0.049px;">2022-02-21 06:12:38</span>
<div class="a" style="left:298px;top:902.5px;width:968.5px;height:1px;background:#e6e6e6;"></div>
<div class="a" style="left:356px;top:878px;width:1px;height:25px;background:#ebebeb;"></div>
<div class="a" style="left:458px;top:878px;width:1px;height:25px;background:#ebebeb;"></div>
<div class="a" style="left:775px;top:878px;width:1px;height:25px;background:#ebebeb;"></div>
<div class="a" style="left:997px;top:878px;width:1px;height:25px;background:#ebebeb;"></div>
<div class="a" style="left:1109px;top:878px;width:1px;height:25px;background:#ebebeb;"></div>
<span id="t151" class="t" style="top:881.96px;font-size:16px;color:#1a1a1a;right:1199.7px;">13</span>
<span id="t152" class="t" style="top:881.96px;font-size:16px;color:#1a1a1a;left:359.5px;">test2</span>
<span id="t153" class="t" style="top:881.96px;font-size:16px;color:#1a1a1a;left:461px;letter-spacing:-0.361px;">B1jE2T3lRJcFWRW3NhzDdQ==</span>
<span id="t154" class="t" style="top:881.96px;font-size:16px;color:#1a1a1a;right:445.7px;">1</span>
<span id="t155" class="t" style="top:881.96px;font-size:16px;color:#1a1a1a;left:1112px;letter-spacing:0.049px;">2022-02-24 14:02:22</span>
<div class="a" style="left:1267px;top:553.9px;width:21px;height:341px;background:#f0f0f0;"></div>
<svg class="a" style="left:1272px;top:561px;" width="10" height="7" viewBox="0 0 10 7"><path d="M0.6 6.2 L5 1.4 L9.4 6.2" stroke="#555" stroke-width="1.6" fill="none"/></svg>
<div class="a" style="left:1268px;top:735px;width:18.5px;height:160px;background:#cdcdcd;"></div>
<svg class="a" style="left:322px;top:850px;" width="132" height="12" viewBox="0 0 132 12"><path d="M4.5 7.6 C40 4.5 90 5.6 127 5" stroke="#dd1424" stroke-width="3" fill="none" stroke-linecap="round"/></svg>
<div class="a" style="left:1083px;top:853.4px;width:44.5px;height:2.2px;background:#dd1424;border-radius:1.1px;"></div>
</div>
</div>
</body></html>
